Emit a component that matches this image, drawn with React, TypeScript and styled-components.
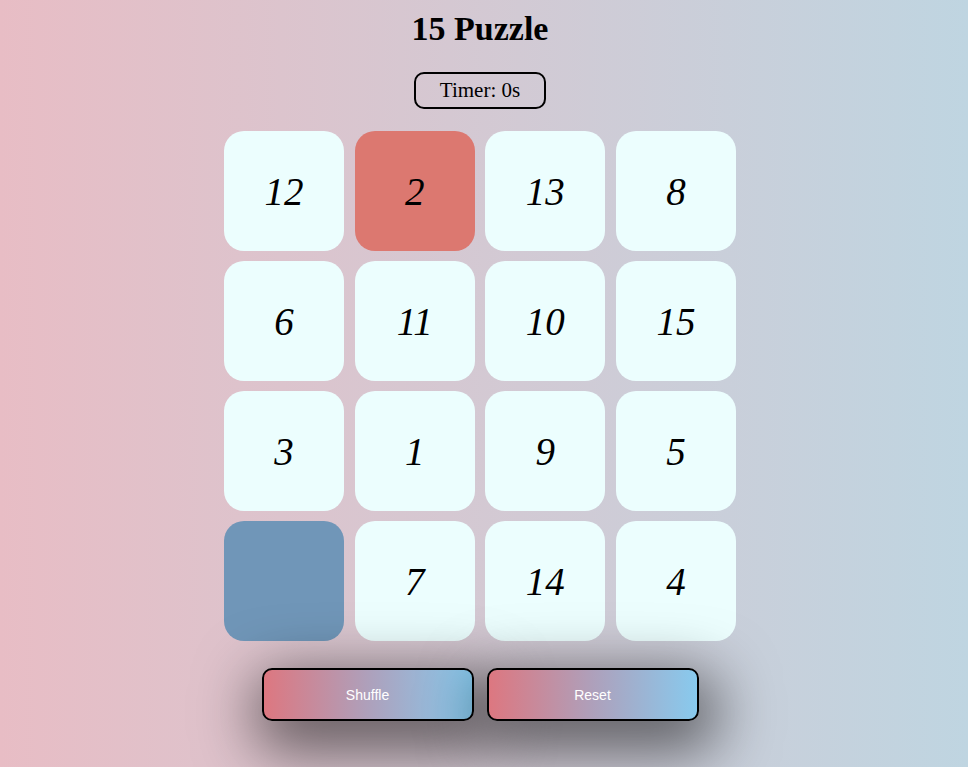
import React, { useState } from 'react';
import styled, { createGlobalStyle } from 'styled-components';

const GlobalStyle = createGlobalStyle`
  html, body {
    margin: 0;
    padding: 0;
    height: 100%;
  }
  body {
    font-family: "Liberation Serif", "Times New Roman", serif;
    background: linear-gradient(to right, #e8bdc5, #bfd5e1);
    min-height: 767px;
    overflow: hidden;
  }
`

const Page = styled.div`
  display: flex;
  flex-direction: column;
  align-items: center;
  padding: 10px 8px 0 0;
`

const Title = styled.h1`
  margin: 0;
  font-size: 34px;
  font-weight: bold;
  line-height: 37px;
`

const Timer = styled.div`
  margin-top: 25px;
  width: 132px;
  height: 37px;
  box-sizing: border-box;
  border: 2px solid #000;
  border-radius: 10px;
  display: flex;
  align-items: center;
  justify-content: center;
  font-size: 21px;
`

const Board = styled.div`
  margin-top: 22px;
  display: grid;
  grid-template-columns: repeat(4, 120px);
  grid-auto-rows: 120px;
  row-gap: 10px;
  column-gap: 10.6px;
`

const Tile = styled.div<{ kind: 'normal' | 'correct' | 'empty' }>`
  border-radius: 20px;
  display: flex;
  align-items: center;
  justify-content: center;
  font-size: 39px;
  font-style: italic;
  color: #000;
  background: ${props =>
    props.kind === 'correct' ? '#dc7870' :
    props.kind === 'empty' ? '#7096b8' :
    '#ecfefe'};
`

const Controls = styled.div`
  margin-top: 27px;
  display: flex;
  gap: 13px;
`

const Button = styled.button`
  width: 212px;
  height: 53px;
  border: 2px solid #000;
  border-radius: 10px;
  background: linear-gradient(to right, #dd7780, #aea0bb 50%, #88caee);
  color: #fff;
  font-family: "Liberation Sans", Arial, sans-serif;
  font-size: 14px;
  cursor: pointer;
  box-shadow: 6px 18px 60px 12px rgba(0, 0, 0, 0.55);
`

const initial = [12, 2, 13, 8, 6, 11, 10, 15, 3, 1, 9, 5, 0, 7, 14, 4];

export default function App() {
  const [ tiles ] = useState(initial);
  const [ seconds ] = useState(0);

  return (
    <>
      <GlobalStyle />
      <Page>
        <Title>15 Puzzle</Title>
        <Timer>Timer: {seconds}s</Timer>
        <Board>
          {
            tiles.map((n, idx) => (
              <Tile
                key={`tile-${idx}`}
                kind={n === 0 ? 'empty' : n === idx + 1 ? 'correct' : 'normal'}
              >
                {n !== 0 && n}
              </Tile>
            ))
          }
        </Board>
        <Controls>
          <Button>Shuffle</Button>
          <Button>Reset</Button>
        </Controls>
      </Page>
    </>
  )
}
